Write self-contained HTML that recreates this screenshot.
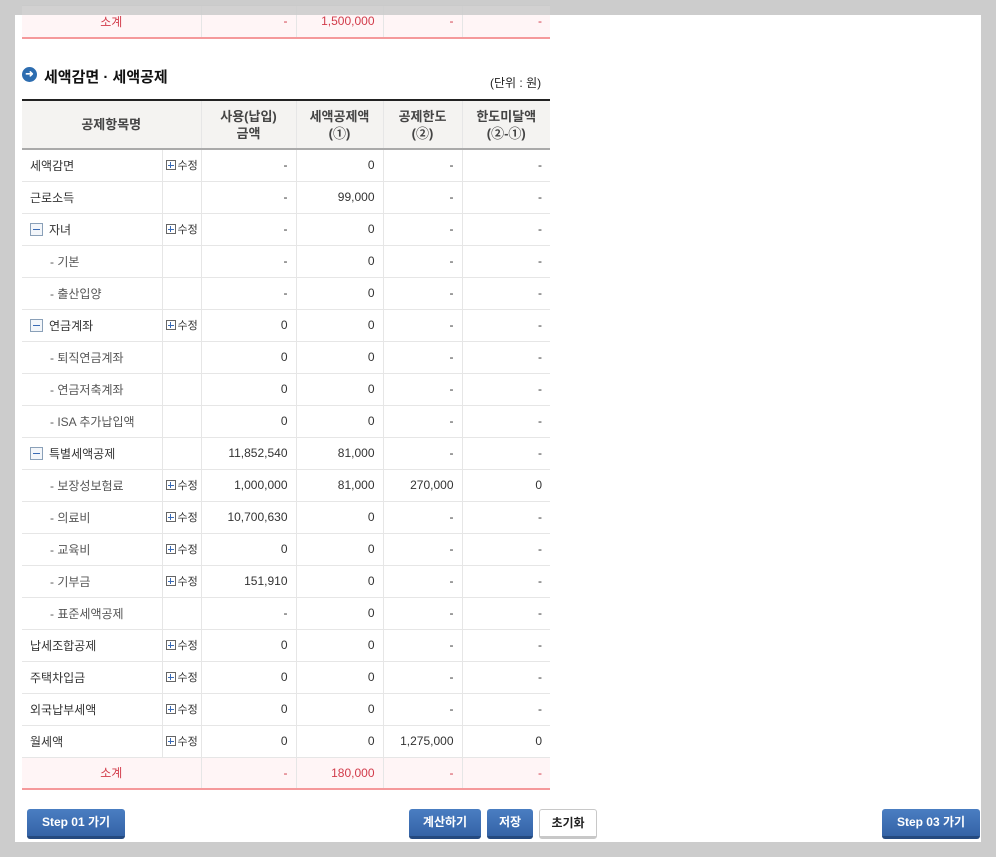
<!DOCTYPE html>
<html><head><meta charset="utf-8"><style>
*{margin:0;padding:0;box-sizing:border-box}
body{width:996px;height:857px;background:#cccccc;position:relative;overflow:hidden;font-family:"Liberation Sans","Noto Sans CJK KR","NanumGothic",sans-serif;font-size:12px;color:#333}
#panel{position:absolute;left:15px;top:15px;width:966px;height:827px;background:#fff}
table{border-collapse:collapse;table-layout:fixed;position:absolute;left:22px;width:528px}
td,th{border-left:1px solid #e6e6e6;border-bottom:1px solid #e6e6e6;height:32px;padding:0 8px;white-space:nowrap;overflow:hidden}
tr td:first-child,tr th:first-child{border-left:none}
td.n{text-align:right}
td.m{padding:0 0 0 3px;font-size:11px}
.sub td{background:#fff5f6;color:#d23b4a;border-bottom:2px solid #f5999b}
th{background:#f4f3f1;font-weight:bold;color:#444;height:49px;border-top:2px solid #222;border-bottom:2px solid #aaa;line-height:17px;font-size:13px}
.plus{display:inline-block;width:10px;height:10px;border:1px solid #666;position:relative;vertical-align:-1px;margin-right:2px}
.plus:before{content:"";position:absolute;left:1px;top:3.5px;width:6px;height:1px;background:#3a6bb5}
.plus:after{content:"";position:absolute;left:3.5px;top:1px;width:1px;height:6px;background:#3a6bb5}
.minus{display:inline-block;width:13px;height:13px;border:1px solid #8aa0b8;background:#f3f6fa;position:relative;vertical-align:-2px;margin-right:6px}
.minus:before{content:"";position:absolute;left:2px;top:5px;width:7px;height:1px;background:#3a6bb5}
.c1{padding-left:28px;color:#555}
.btn{position:absolute;top:809px;height:30px;border-radius:3px;background:linear-gradient(#4a7ec2,#3463a6);border-bottom:3px solid #24497f;color:#fff;font-weight:bold;font-size:12px;text-align:center;line-height:27px}
</style></head><body>
<div id="panel"></div>
<table style="top:5px">
<colgroup><col style="width:140px"><col style="width:39px"><col style="width:95px"><col style="width:87px"><col style="width:79px"><col style="width:88px"></colgroup>
<tr class="sub"><td colspan="2" style="text-align:center;border-top:1px solid #bbb">소계</td><td class="n" style="border-top:1px solid #bbb">-</td><td class="n" style="border-top:1px solid #bbb">1,500,000</td><td class="n" style="border-top:1px solid #bbb">-</td><td class="n" style="border-top:1px solid #bbb">-</td></tr>
</table>
<div style="position:absolute;left:0;top:0;width:996px;height:15px;background:rgba(204,204,204,0.88)"></div>
<div style="position:absolute;left:15px;top:0;width:1px;height:0"></div>
<div style="position:absolute;left:22px;top:67px;width:15px;height:15px;border-radius:50%;background:#2d6db0;color:#fff;font-size:10px;line-height:15px;text-align:center;font-weight:bold">➜</div>
<div style="position:absolute;left:44px;top:66px;font-size:15px;font-weight:bold;color:#111">세액감면 · 세액공제</div>
<div style="position:absolute;left:490px;top:74px;font-size:12px;color:#222">(단위 : 원)</div>
<table style="top:99px">
<colgroup><col style="width:140px"><col style="width:39px"><col style="width:95px"><col style="width:87px"><col style="width:79px"><col style="width:88px"></colgroup>
<tr><th colspan="2">공제항목명</th><th>사용(납입)<br>금액</th><th>세액공제액<br>(①)</th><th>공제한도<br>(②)</th><th>한도미달액<br>(②-①)</th></tr>
<tr><td>세액감면</td><td class="m"><span class="plus"></span>수정</td><td class="n">-</td><td class="n">0</td><td class="n">-</td><td class="n">-</td></tr>
<tr><td>근로소득</td><td></td><td class="n">-</td><td class="n">99,000</td><td class="n">-</td><td class="n">-</td></tr>
<tr><td><span class="minus"></span>자녀</td><td class="m"><span class="plus"></span>수정</td><td class="n">-</td><td class="n">0</td><td class="n">-</td><td class="n">-</td></tr>
<tr><td class="c1">- 기본</td><td></td><td class="n">-</td><td class="n">0</td><td class="n">-</td><td class="n">-</td></tr>
<tr><td class="c1">- 출산입양</td><td></td><td class="n">-</td><td class="n">0</td><td class="n">-</td><td class="n">-</td></tr>
<tr><td><span class="minus"></span>연금계좌</td><td class="m"><span class="plus"></span>수정</td><td class="n">0</td><td class="n">0</td><td class="n">-</td><td class="n">-</td></tr>
<tr><td class="c1">- 퇴직연금계좌</td><td></td><td class="n">0</td><td class="n">0</td><td class="n">-</td><td class="n">-</td></tr>
<tr><td class="c1">- 연금저축계좌</td><td></td><td class="n">0</td><td class="n">0</td><td class="n">-</td><td class="n">-</td></tr>
<tr><td class="c1">- ISA 추가납입액</td><td></td><td class="n">0</td><td class="n">0</td><td class="n">-</td><td class="n">-</td></tr>
<tr><td><span class="minus"></span>특별세액공제</td><td></td><td class="n">11,852,540</td><td class="n">81,000</td><td class="n">-</td><td class="n">-</td></tr>
<tr><td class="c1">- 보장성보험료</td><td class="m"><span class="plus"></span>수정</td><td class="n">1,000,000</td><td class="n">81,000</td><td class="n">270,000</td><td class="n">0</td></tr>
<tr><td class="c1">- 의료비</td><td class="m"><span class="plus"></span>수정</td><td class="n">10,700,630</td><td class="n">0</td><td class="n">-</td><td class="n">-</td></tr>
<tr><td class="c1">- 교육비</td><td class="m"><span class="plus"></span>수정</td><td class="n">0</td><td class="n">0</td><td class="n">-</td><td class="n">-</td></tr>
<tr><td class="c1">- 기부금</td><td class="m"><span class="plus"></span>수정</td><td class="n">151,910</td><td class="n">0</td><td class="n">-</td><td class="n">-</td></tr>
<tr><td class="c1">- 표준세액공제</td><td></td><td class="n">-</td><td class="n">0</td><td class="n">-</td><td class="n">-</td></tr>
<tr><td>납세조합공제</td><td class="m"><span class="plus"></span>수정</td><td class="n">0</td><td class="n">0</td><td class="n">-</td><td class="n">-</td></tr>
<tr><td>주택차입금</td><td class="m"><span class="plus"></span>수정</td><td class="n">0</td><td class="n">0</td><td class="n">-</td><td class="n">-</td></tr>
<tr><td>외국납부세액</td><td class="m"><span class="plus"></span>수정</td><td class="n">0</td><td class="n">0</td><td class="n">-</td><td class="n">-</td></tr>
<tr><td>월세액</td><td class="m"><span class="plus"></span>수정</td><td class="n">0</td><td class="n">0</td><td class="n">1,275,000</td><td class="n">0</td></tr>
<tr class="sub"><td colspan="2" style="text-align:center">소계</td><td class="n">-</td><td class="n">180,000</td><td class="n">-</td><td class="n">-</td></tr>
</table>
<div class="btn" style="left:27px;width:98px">Step 01 가기</div>
<div class="btn" style="left:409px;width:72px">계산하기</div>
<div class="btn" style="left:487px;width:46px">저장</div>
<div class="btn" style="left:539px;width:58px;background:#fff;color:#222;border:1px solid #c8c8c8;border-bottom:3px solid #c8c8c8">초기화</div>
<div class="btn" style="left:882px;width:98px">Step 03 가기</div>
</body></html>
